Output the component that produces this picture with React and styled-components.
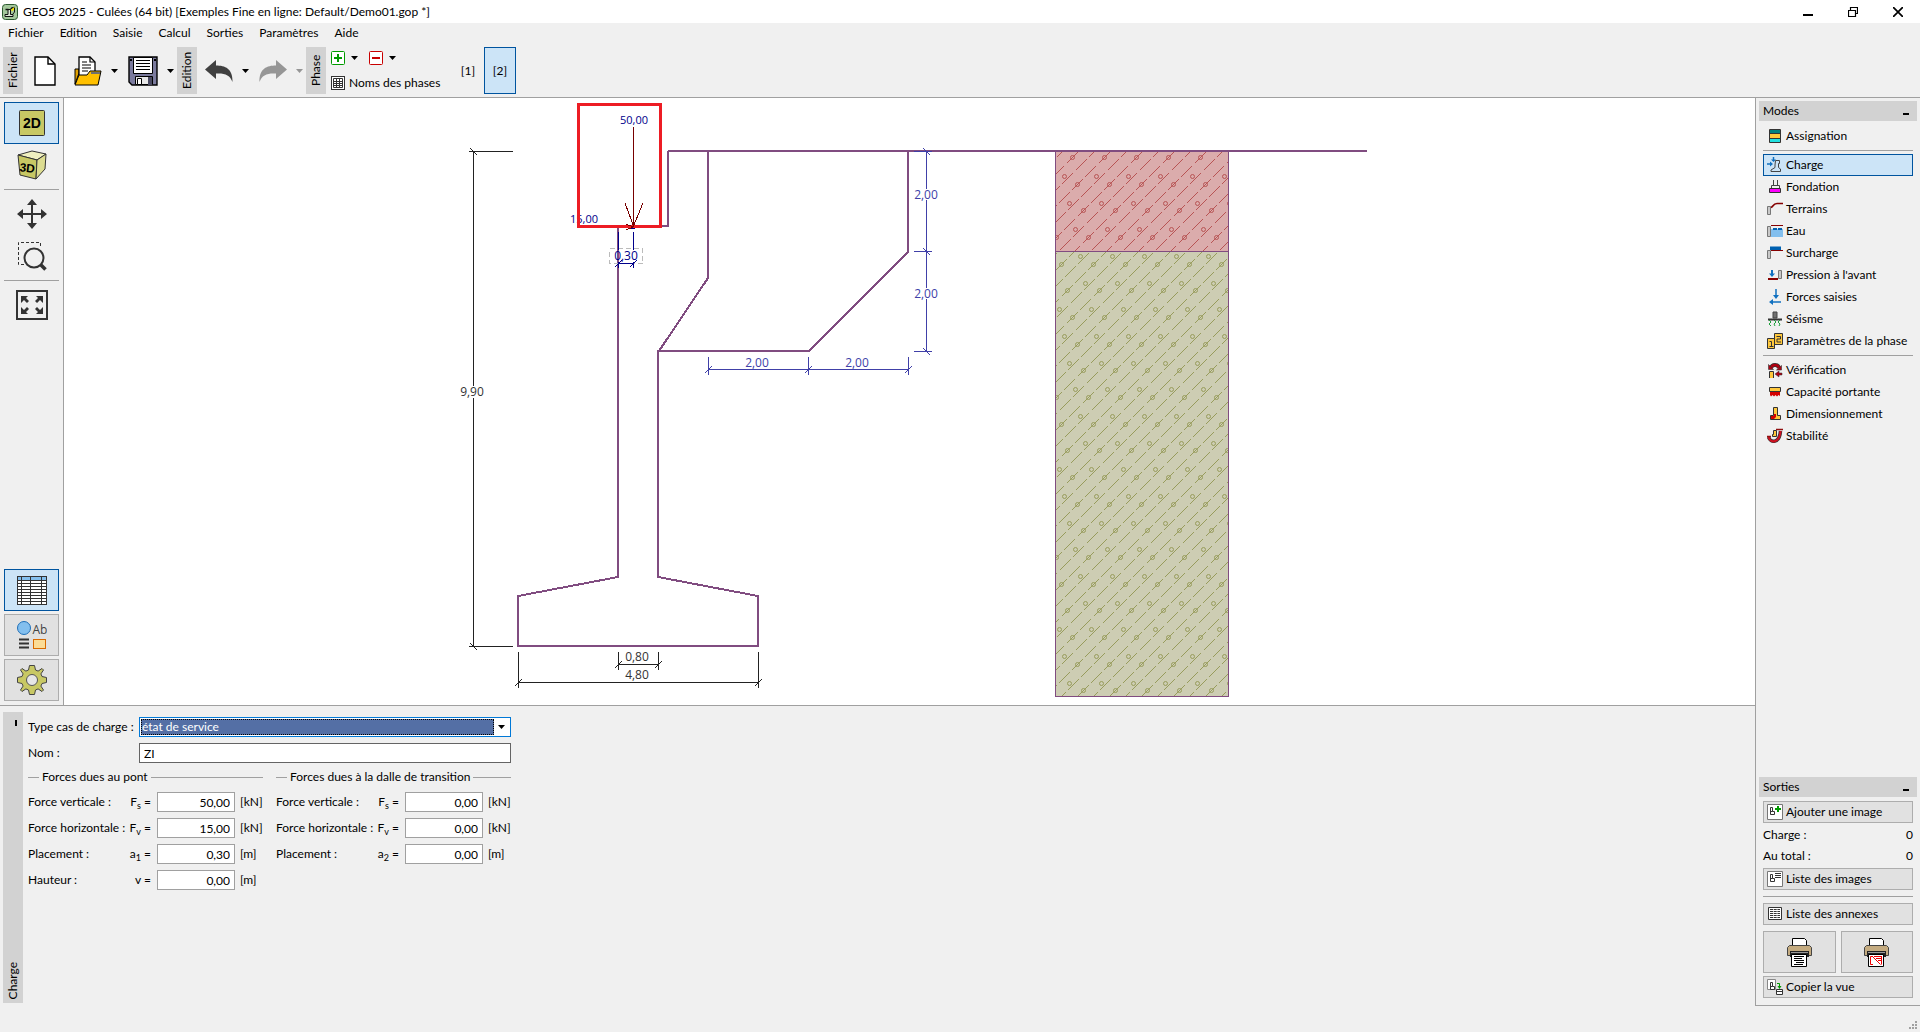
import styled, { createGlobalStyle, css } from 'styled-components';

const GlobalStyle = createGlobalStyle`
  * { box-sizing: border-box; }
  body {
    margin: 0;
    background: #f0f0f0;
    color: #000;
    font: 12px/16px Lato, "Open Sans", sans-serif;
  }
  button, input, select { font: inherit; color: inherit; }
  svg { display: block; flex: none; }
`;

// === LAYOUT ===
const Page = styled.div`
  display: flex;
  flex-direction: column;
  min-height: 100vh;
`;

const TitleBar = styled.header`
  display: flex;
  align-items: center;
  height: 23px;
  padding-left: 2px;
  background: #fff;
`;

const Title = styled.h1`
  flex: 1;
  margin: 0 0 0 5px;
  font-size: 12px;
  font-weight: 400;
`;

const WindowButton = styled.button`
  display: grid;
  place-items: center;
  width: 45px;
  height: 23px;
  padding: 0;
  border: 0;
  background: none;
`;

const MenuBar = styled.nav`
  display: flex;
  gap: 16px;
  height: 20px;
  padding: 0 8px;
`;

const MenuLink = styled.a`
  line-height: 20px;
  color: #000;
  text-decoration: none;
`;

const Toolbar = styled.div`
  display: flex;
  align-items: center;
  height: 55px;
  padding: 4px 3px 3px;
  border-bottom: 1px solid #a0a0a0;
`;

const Grip = styled.span`
  flex: none;
  width: 20px;
  height: 47px;
  background: #d2d2d2;
  line-height: 20px;
  text-align: center;
  writing-mode: vertical-rl;
  transform: rotate(180deg);
`;

const ToolGroup = styled.div`
  display: flex;
  flex: none;
  align-items: center;
  gap: 10px;
  padding: 0 3px 0 8px;
`;

const ToolButton = styled.button`
  display: flex;
  align-items: center;
  gap: ${({ $gap }) => $gap || 9}px;
  padding: 0;
  border: 0;
  background: none;
  white-space: nowrap;
`;

const NewButton = styled(ToolButton)`
  margin: 0 8px 0 3px;
`;

const PhaseTools = styled.div`
  display: flex;
  flex-direction: column;
  gap: 10px;
  width: 126px;
  padding-left: 5px;
`;

const PhaseRow = styled.div`
  display: flex;
  gap: 11px;
`;

const activeBox = css`
  border: 1px solid #00549f;
  background: #cce4f7;
`;

const PhaseTab = styled.button`
  width: 32px;
  height: 47px;
  padding: 0;
  border: 1px solid transparent;
  background: none;
  ${({ $active }) => $active && activeBox}
`;

const Body = styled.div`
  display: flex;
  flex: 1;
`;

const Main = styled.main`
  display: flex;
  flex: 1;
  flex-direction: column;
  min-width: 0;
`;

const Workspace = styled.section`
  display: flex;
  flex: 1;
  border-bottom: 1px solid #a0a0a0;
`;

const SideTools = styled.div`
  display: flex;
  flex-direction: column;
  width: 64px;
  padding: 4px;
  border-right: 1px solid #a0a0a0;
`;

const SideButton = styled.button`
  display: grid;
  place-items: center;
  height: 42px;
  padding: 0;
  border: 1px solid transparent;
  background: none;
  ${({ $raised }) => $raised && css`
    border-color: #adadad;
    background: #e1e1e1;
  `}
  ${({ $active }) => $active && activeBox}
`;

const SideBottom = styled.div`
  display: grid;
  gap: 3px;
  margin-top: auto;
`;

const Rule = styled.hr`
  width: auto;
  height: 1px;
  margin: ${({ $space }) => $space || 3}px 0;
  border: 0;
  background: #a0a0a0;
`;

const Canvas = styled.div`
  flex: 1;
  min-width: 0;
  background: #fff;
`;

const Drawing = styled.svg`
  width: 100%;
  height: auto;
  text {
    font-family: "Open Sans", "Noto Sans", sans-serif;
    font-size: 12px;
    text-anchor: middle;
  }
`;

const LoadText = styled.text`
  && { font-size: 11px; }
`;

const StatusBar = styled.footer`
  display: flex;
  justify-content: flex-end;
  align-items: flex-end;
  height: 26px;
  padding: 2px;
`;

// === FORM ===
const FormPanel = styled.section`
  display: flex;
  gap: 5px;
  min-height: 300px;
  padding: 6px 3px 3px;
`;

const FormGrip = styled.div`
  display: flex;
  flex: none;
  flex-direction: column;
  align-items: center;
  justify-content: space-between;
  width: 20px;
  padding: 8px 0 4px;
  background: #d2d2d2;
`;

const VerticalText = styled.span`
  line-height: 20px;
  writing-mode: vertical-rl;
  transform: rotate(180deg);
`;

const GripMark = styled.span`
  width: 2px;
  height: 6px;
  margin-left: 6px;
  background: #000;
`;

const Form = styled.form`
  display: flex;
  flex-direction: column;
  gap: 6px;
  width: 483px;
  padding-top: 5px;
`;

const WideRow = styled.div`
  display: grid;
  grid-template-columns: 111px 1fr;
  align-items: center;
  height: 20px;
  white-space: nowrap;
`;

const SelectBox = styled.div`
  display: flex;
  align-items: center;
  height: 20px;
  padding: 1px 5px 1px 1px;
  border: 1px solid #0078d7;
  background: #fff;
`;

const Select = styled.select`
  flex: 1;
  height: 16px;
  margin-right: 4px;
  padding: 0;
  border: 1px dotted #000;
  border-radius: 0;
  outline: 0;
  background: #546fa5;
  color: #fff;
  line-height: 14px;
  appearance: none;
`;

const Input = styled.input`
  width: 100%;
  height: 20px;
  padding: 0 4px;
  border: 1px solid ${({ $numeric }) => ($numeric ? '#a0a0a0' : '#646464')};
  border-radius: 0;
  outline: 0;
  background: #fff;
  text-align: ${({ $numeric }) => ($numeric ? 'right' : 'left')};
`;

const Groups = styled.div`
  display: grid;
  grid-template-columns: 1fr 1fr;
  gap: 13px;
`;

const Group = styled.fieldset`
  display: flex;
  flex-direction: column;
  gap: 6px;
  min-width: 0;
  margin: 0;
  padding: 0;
  border: 0;
`;

const Legend = styled.legend`
  display: flex;
  align-items: center;
  gap: 3px;
  width: 100%;
  margin-bottom: 7px;
  padding: 0;
  white-space: nowrap;
  &::before, &::after {
    content: "";
    height: 1px;
    background: #a0a0a0;
  }
  &::before { width: 11px; }
  &::after { flex: 1; }
`;

const FieldRow = styled.div`
  display: grid;
  grid-template-columns: 1fr 78px 23px;
  column-gap: 5px;
  align-items: center;
  height: 20px;
`;

const FieldLabel = styled.label`
  display: flex;
  justify-content: space-between;
  min-width: 0;
  padding-right: 1px;
  white-space: nowrap;
  sub { font-size: 9px; line-height: 0; }
`;

// === RIGHT PANEL ===
const RightPanel = styled.aside`
  display: flex;
  flex-direction: column;
  justify-content: space-between;
  width: 165px;
  padding: 3px 3px 7px;
  border-left: 1px solid #a0a0a0;
  border-bottom: 1px solid #a0a0a0;
`;

const PanelHeader = styled.h2`
  display: flex;
  align-items: center;
  justify-content: space-between;
  height: 20px;
  margin: 0 0 4px;
  padding: 0 8px 0 4px;
  background: #d2d2d2;
  font-size: 12px;
  font-weight: 400;
`;

const Minimize = styled.span`
  width: 6px;
  height: 2px;
  margin-top: 6px;
  background: #000;
`;

const PanelBody = styled.div`
  display: flex;
  flex-direction: column;
  padding: 0 4px;
`;

const ModeButton = styled.button`
  display: flex;
  align-items: center;
  gap: 3px;
  height: 22px;
  padding: 0 0 0 3px;
  border: 1px solid transparent;
  background: none;
  text-align: left;
  white-space: nowrap;
  ${({ $raised }) => $raised && css`
    border-color: #adadad;
    background: #e1e1e1;
  `}
  ${({ $active }) => $active && activeBox}
`;

const CountRow = styled.div`
  display: flex;
  justify-content: space-between;
  line-height: 21px;
`;

const Counts = styled.div`
  padding: 1px 0 2px;
`;

const PrintRow = styled.div`
  display: grid;
  grid-template-columns: 1fr 1fr;
  gap: 5px;
  margin: 6px 0 3px;
`;

// === ICONS ===
const icon16 = { width: 16, height: 16, viewBox: '0 0 16 16', fill: 'none', 'aria-hidden': true };

const Caret = ({ color = '#000' }) => (
  <svg width="7" height="4" viewBox="0 0 7 4" aria-hidden="true"><path d="M0 0h7L3.5 4z" fill={color} /></svg>
);

const AppIcon = () => (
  <svg {...icon16}>
    <rect x=".5" y=".5" width="15" height="15" rx="3" fill="#a4c79c" stroke="#2c5a30" />
    <path d="M3 12.5h8v-2H8.500V5.500H6v5H3z" fill="#dce8d6" stroke="#111" />
    <path d="M3.500 5.500h3M8.500 5.500c1-2 2-2 4-2" stroke="#111" strokeWidth="1.5" />
    <path d="M9.500 6.500l3-2.500" stroke="#f5e500" strokeWidth="1.8" />
    <path d="M12.500 4v4l-1.500 2" stroke="#111" />
  </svg>
);

const NewIcon = () => (
  <svg width="22" height="30" viewBox="0 0 22 30" aria-hidden="true">
    <path d="M1 1h13l7 7v21H1z" fill="#fff" stroke="#000" strokeWidth="1.4" />
    <path d="M14 1v7h7" fill="none" stroke="#000" strokeWidth="1.4" />
  </svg>
);

const OpenIcon = () => (
  <svg width="28" height="30" viewBox="0 0 28 30" aria-hidden="true">
    <path d="M1 13h4v4l-4 11z" fill="#e0a000" stroke="#000" />
    <path d="M5 1h11l5 5v14H5z" fill="#fff" stroke="#000" strokeWidth="1.3" />
    <path d="M16 1v5h5M8 6h5M8 9h9M8 12h9M8 15h6" fill="none" stroke="#000" strokeWidth="1.2" />
    <path d="M1 29l4-10h8l3-4h11l-3 14z" fill="#ffc000" stroke="#000" />
    <path d="M17 17h9" stroke="#707070" strokeWidth="2" />
  </svg>
);

const SaveIcon = () => (
  <svg width="30" height="30" viewBox="0 0 30 30" aria-hidden="true">
    <path d="M1 1h28v28H4l-3-3z" fill="#7b7b9e" stroke="#000" strokeWidth="1.4" />
    <path d="M5.5 1.5h19v16h-19z" fill="#fff" stroke="#000" />
    <path d="M8 4.5h14M8 7.5h14M8 10.5h14M8 13.5h14" stroke="#000" />
    <path d="M7.5 20.5h17v8h-17z" fill="#e8e8e8" stroke="#000" />
    <path d="M9.5 22.5h4v6h-4z" fill="#fff" stroke="#000" />
    <path d="M20 21h4v8h-4z" fill="#4a4a62" />
    <path d="M2 3h2v2H2zM26 3h2v2h-2z" fill="#000" />
  </svg>
);

const ArrowIcon = ({ color, flip }) => (
  <svg width="28" height="22" viewBox="0 0 28 22" aria-hidden="true">
    <path
      d="M0 9.5L11 0v5.5c9 0 17 3 16.5 16.5C25 15 20 13 11 13.5V19z"
      fill={color}
      transform={flip ? 'translate(28 0) scale(-1 1)' : undefined}
    />
  </svg>
);

const SignIcon = ({ color, plus }) => (
  <svg width="14" height="14" viewBox="0 0 14 14" aria-hidden="true">
    <rect x=".5" y=".5" width="13" height="13" rx="1" fill="#fff" stroke={color} />
    <path d={plus ? 'M3 7h8M7 3v8' : 'M3 7h8'} stroke={color} strokeWidth="2" />
  </svg>
);

const NamesIcon = () => (
  <svg width="14" height="14" viewBox="0 0 14 14" fill="none" stroke="#333" aria-hidden="true">
    <rect x=".5" y=".5" width="13" height="13" fill="#fff" />
    <path d="M2.5 2.5h9v9h-9zM2.5 5.5h9M2.5 7.5h9M2.5 9.5h9M5.5 2.5v9M8.5 2.5v9" />
  </svg>
);

const View2DIcon = () => (
  <svg width="26" height="26" viewBox="0 0 26 26" aria-hidden="true">
    <rect x=".5" y=".5" width="25" height="25" rx="1" fill="#c8c864" stroke="#333" />
    <text x="13" y="18" textAnchor="middle" fontFamily="Liberation Sans, sans-serif" fontWeight="700" fontSize="14">2D</text>
  </svg>
);

const View3DIcon = () => (
  <svg width="30" height="30" viewBox="0 0 30 30" stroke="#333" strokeLinejoin="round" aria-hidden="true">
    <path d="M1 5L15 1l14 3-9 6z" fill="#f0f0c0" />
    <path d="M1 5l19 5-1 19L3 25z" fill="#c8c864" />
    <path d="M20 10l9-6-1 15-9 10z" fill="#dcdc90" />
    <text x="10" y="22" transform="rotate(6 10 20)" stroke="none" textAnchor="middle" fontFamily="Liberation Sans, sans-serif" fontWeight="700" fontSize="12">3D</text>
  </svg>
);

const MoveIcon = () => (
  <svg width="30" height="30" viewBox="0 0 30 30" aria-hidden="true">
    <path d="M15 4v22M4 15h22" stroke="#333" strokeWidth="2" />
    <path d="M15 0l5 6H10zM15 30l5-6H10zM0 15l6-5v10zM30 15l-6-5v10z" fill="#333" />
  </svg>
);

const ZoomIcon = () => (
  <svg width="30" height="30" viewBox="0 0 30 30" fill="none" stroke="#333" aria-hidden="true">
    <path d="M7 23.5H1.5v-22h22V7" strokeDasharray="3 2" />
    <circle cx="17" cy="17" r="9.5" strokeWidth="2" />
    <path d="M23.5 23.5l5 5" strokeWidth="3.5" />
  </svg>
);

const FitIcon = () => (
  <svg width="24" height="30" viewBox="0 0 24 30" overflow="visible" aria-hidden="true">
    <rect x="-3" y="1" width="30" height="28" fill="none" stroke="#333" strokeWidth="2" />
    <path d="M1 6h7L6 8l3 3-2 2-3-3-3 3zM23 6h-7l2 2-3 3 2 2 3-3 3 3zM1 24h7l-2-2 3-3-2-2-3 3-3-3zM23 24h-7l2-2-3-3 2-2 3 3 3-3z" fill="#333" />
  </svg>
);

const TableIcon = () => (
  <svg width="30" height="29" viewBox="0 0 30 29" shapeRendering="crispEdges" aria-hidden="true">
    <rect x=".5" y=".5" width="29" height="28" fill="#fff" stroke="#333" />
    <path d="M1 1h28v3H1z" fill="#83bfee" />
    <path d="M4.5 1v27M13.5 1v27M24.5 1v27M1 4.5h28M1 7.5h28M1 10.5h28M1 13.5h28M1 16.5h28M1 19.5h28M1 22.5h28M1 25.5h28" stroke="#333" />
  </svg>
);

const StyleIcon = () => (
  <svg width="30" height="28" viewBox="0 0 30 28" aria-hidden="true">
    <circle cx="7" cy="7" r="6.5" fill="#83bfee" stroke="#2070b8" />
    <text x="23" y="13" textAnchor="middle" fontFamily="Open Sans, sans-serif" fontSize="12" fill="#444">Ab</text>
    <path d="M2 18.5h10M2 22.5h10M2 26.5h10" stroke="#333" strokeWidth="2" />
    <rect x="16.5" y="18.5" width="12" height="9" fill="#fbdc96" stroke="#d86a00" />
  </svg>
);

const GearIcon = () => (
  <svg width="30" height="30" viewBox="-15 -15 30 30" aria-hidden="true">
    <path
      d="M-2.5-14.5h5l1 4.5 2.6 1.1L10-11.5 11.5-10 8.9-6.1 10-3.5l4.5 1v5l-4.5 1-1.1 2.6L11.5 10 10 11.5 6.1 8.9 3.5 10l-1 4.5h-5l-1-4.5-2.6-1.1L-10 11.5-11.5 10-8.9 6.1-10 3.5l-4.5-1v-5l4.5-1 1.1-2.6L-11.5-10-10-11.5-6.1-8.9-3.5-10z"
      fill="#c8c864"
      stroke="#444"
      strokeLinejoin="round"
    />
    <circle r="5.5" fill="#e6e6e6" stroke="#555" />
  </svg>
);

const AssignIcon = () => (
  <svg {...icon16}>
    <path d="M2.5 1.5h11v13h-11z" fill="#ffc83c" stroke="#333" />
    <path d="M3 2h10v3H3z" fill="#008080" />
    <path d="M3 11h10v3H3z" fill="#20e0e0" />
    <path d="M3 5.5h10M3 10.5h10" stroke="#333" />
  </svg>
);

const ChargeIcon = () => (
  <svg {...icon16}>
    <path d="M0 7h4M6.5 0v4" stroke="#1070c0" strokeWidth="1.5" />
    <path d="M3 4.500l3 2.500-3 2.500zM4 2.500h5L6.500 5z" fill="#1070c0" />
    <path d="M8.500 3.500h4v3h-1v4l2 1.500v2.500h-9.500v-1.500l4-2.500V8z" stroke="#444" />
  </svg>
);

const FoundationIcon = () => (
  <svg {...icon16}>
    <path d="M6.5 1v5M10.5 1v5M4.5 9.5v-3h8v3" stroke="#444" />
    <path d="M2.5 9.5h11v4h-11z" fill="#ff00ff" stroke="#333" />
  </svg>
);

const TerrainIcon = () => (
  <svg {...icon16}>
    <path d="M.5 5.5h3v8h-3z" fill="#c8c8c8" stroke="#777" />
    <path d="M4 6.5C6 6 6 2.5 10 2.5h6" stroke="#850000" strokeWidth="1.7" />
  </svg>
);

const WaterIcon = () => (
  <svg {...icon16}>
    <path d="M4 6h12v8H4z" fill="#83bfee" />
    <path d="M.5 3.5h3v10h-3z" fill="#c8c8c8" stroke="#777" />
    <path d="M4 2.5h12" stroke="#850000" />
    <path d="M6 6h4m1 0h4" stroke="#0060b0" strokeWidth="2" />
  </svg>
);

const SurchargeIcon = () => (
  <svg {...icon16}>
    <path d="M.5 5.5h3v8h-3z" fill="#c8c8c8" stroke="#777" />
    <path d="M4 5.5h12" stroke="#850000" />
    <path d="M3 1l1 1 1-1 1 1 1-1 1 1 1-1 1 1 1-1 1 1 1-1 1 1v3H3z" fill="#0060b0" />
  </svg>
);

const PressureIcon = () => (
  <svg {...icon16}>
    <path d="M1 12h10" stroke="#850000" strokeWidth="2" />
    <path d="M5 3v5" stroke="#1070c0" strokeWidth="2" />
    <path d="M2 6.5h6L5 10z" fill="#1070c0" />
    <path d="M11.5 3.5h3v8h-3z" fill="#c8c8c8" stroke="#777" />
  </svg>
);

const ForcesIcon = () => (
  <svg {...icon16}>
    <path d="M9 0v8M5 13h9" stroke="#1070c0" strokeWidth="1.5" />
    <path d="M6 6h6l-3 4zM2 13l4-3v6z" fill="#1070c0" />
  </svg>
);

const SeismicIcon = () => (
  <svg {...icon16}>
    <path d="M6 1h4v6H6z" fill="#707070" stroke="#444" />
    <path d="M1 8.5h14" stroke="#333" strokeWidth="2" />
    <path d="M2 9l2 2-2 2 2 2M7 9l2 2-2 2 1 2M13 9l-2 2 2 2-1 2" stroke="#1da03c" />
  </svg>
);

const StageIcon = () => (
  <svg {...icon16}>
    <path d="M7.5.5h8v11h-8z" fill="#ffc83c" stroke="#333" />
    <path d="M.5 5.5h7v10h-7z" fill="#ffc83c" stroke="#333" />
    <path d="M9.5 3.5h4V6H10v3h4M2.5 8.5h2v5m-2 0h4" stroke="#333" />
  </svg>
);

const CheckIcon = () => (
  <svg {...icon16}>
    <path d="M4 6c1-4 7-4 8 0" stroke="#333" strokeWidth="4" />
    <path d="M4 6c1-4 7-4 8 0" stroke="#b00010" strokeWidth="2.5" />
    <path d="M1.5 2.5v5h5zM14.5 3.5V8h-5z" fill="#b00010" stroke="#333" strokeWidth=".6" />
    <path d="M3 10h3v6H3z" fill="#ffc83c" />
    <path d="M2.5 16V9.5h4V16" stroke="#333" />
    <path d="M8 12l4-3v2h3v2h-3v2z" fill="#b00010" stroke="#333" strokeWidth=".5" />
  </svg>
);

const BearingIcon = () => (
  <svg {...icon16}>
    <path d="M3 7h10v5l-1.5-1-1.5 1.5L8.5 11 7 12.5 5.5 11 4 12.5 3 11z" fill="#d40000" />
    <path d="M2.5 3.5h11v4h-11z" fill="#ffc83c" stroke="#333" />
  </svg>
);

const SizingIcon = () => (
  <svg {...icon16}>
    <path d="M6.5 1.5h4v8h3v4h-10v-4h3z" fill="#ffc83c" stroke="#333" />
    <path d="M4 10h3V8h2v3l-2 2H4z" fill="#d40000" />
  </svg>
);

const StabilityIcon = () => (
  <svg {...icon16}>
    <path d="M1.5 9c2 6.500 11 6.500 12-6" stroke="#333" strokeWidth="3.5" />
    <path d="M1.5 9c2 6.500 11 6.500 12-6" stroke="#d01020" strokeWidth="2.2" />
    <path d="M9 1.5h7M0 8.5h4" stroke="#901010" strokeWidth="1.5" />
    <path d="M6.5 2.5h3v6h-4v-2h1z" fill="#ffc83c" stroke="#333" />
  </svg>
);

const PictureIcon = ({ variant }) => (
  <svg {...icon16}>
    {variant === 'copy'
      ? <path d="M.5.5h8v10h-8z" fill="#fff" stroke="#888" />
      : <path d="M.5.5h15v15h-15z" fill="#fff" stroke="#777" />}
    <path d="M3.5 3.5h2v4h2v3h-4zM3.5 7.5h2" stroke="#333" />
    {variant === 'add' && <path d="M11 2v6M8 5h6" stroke="#009a00" strokeWidth="2" />}
    {variant === 'list' && <path d="M8 2.5h6M8 4.5h6M8 6.5h6" stroke="#333" />}
    {variant === 'copy' && (
      <>
        <path d="M10 4.5h2.5V8" stroke="#009a00" />
        <path d="M10.5 7h4l-2 3z" fill="#009a00" />
        <path d="M9.5 10.5h6v5h-6zM9.5 12.5h6" fill="#fff" stroke="#333" />
      </>
    )}
  </svg>
);

const AnnexIcon = () => (
  <svg {...icon16}>
    <path d="M1.5 1.5h13v12h-13z" fill="#fff" stroke="#333" />
    <path d="M3 3.5h10M3 5.5h10M3 7.5h10M3 9.5h10M3 11.5h10" stroke="#333" strokeDasharray="3 .7" />
  </svg>
);

const PrinterIcon = ({ picture }) => (
  <svg width="25" height="29" viewBox="0 0 25 29" aria-hidden="true">
    <path d="M5.5 7.5v-7h12l2 2v5" fill="#fff" stroke="#000" />
    <path d="M.5 9.5l2-2h20l2 2v8H.5z" fill="#c4ab80" stroke="#444" />
    <path d="M3 13h19v6H3z" fill="#222" />
    <path d="M4 14h17v1H4z" fill="#999" />
    <path d="M4.5 16.5h15v12h-15z" fill="#fff" stroke="#000" />
    {picture
      ? <path d="M9 18.5H6.5v8H9M8.5 18.5l8 8M10 18.500h7.500M12 20.500h5.500M14 22.500h3.500M17.500 18v8.500" fill="none" stroke="#e00" />
      : <path d="M7 18.5h10M7 20.5h8M7 22.5h10M9 24.5h8M7 26.5h9" stroke="#000" />}
  </svg>
);

// === DRAWING ===
const range = (from, to) => Array.from({ length: to - from + 1 }, (_, i) => from + i);

// Hatch: dashed 45° lines plus two interleaved sets of pebbles on the same lattice
const cells = range(-1, 21).flatMap((row) =>
  range(-5, 6).map((col) => ({
    x: 1072 + 32 * col + Math.round((16 * row) / 3),
    y: 157 + Math.round((80 * row) / 3),
  })));
const dash = (x, y) => `M${x - 5} ${y + 6}l11 -11`;
const hatchLines = cells
  .map(({ x, y }) => dash(x, y) + dash(x + 13, y - 13) + dash(x + 9, y + 7) + dash(x + 22, y - 6))
  .join('');
const pebbles = cells.flatMap(({ x, y }) => [{ x, y }, { x: x - 8, y: y + 19 }]);

function Soil({ id, top, bottom, fill, line }) {
  return (
    <g>
      <clipPath id={id}><rect x="1055" y={top} width="174" height={bottom - top} /></clipPath>
      <rect x="1055" y={top} width="174" height={bottom - top} fill={fill} />
      <g clipPath={`url(#${id})`} fill="none" stroke={line}>
        <path d={hatchLines} shapeRendering="crispEdges" />
        {pebbles.map(({ x, y }) => <circle key={`${x}-${y}`} cx={x + 0.5} cy={y + 0.5} r="2" />)}
      </g>
      <rect x="1055.5" y={top - 0.5} width="173" height={bottom - top} fill="none" stroke="#804c80" />
    </g>
  );
}

// Horizontal dimension: points along x, extension lines from y1 to y2
function DimX({ points, y, y1, y2, color }) {
  return (
    <g stroke={color} shapeRendering="crispEdges">
      <path d={`M${points[0]} ${y + 0.5}H${points[points.length - 1]}`} />
      {points.map((x) => <path key={x} d={`M${x + 0.5} ${y1}V${y2}M${x - 3} ${y + 4}l7 -7`} />)}
    </g>
  );
}

function DimY({ points, x, x1, x2, color }) {
  return (
    <g stroke={color} shapeRendering="crispEdges">
      <path d={`M${x + 0.5} ${points[0]}V${points[points.length - 1]}`} />
      {points.map((y) => <path key={y} d={`M${x1} ${y + 0.5}H${x2}M${x - 3} ${y - 3}l7 7`} />)}
    </g>
  );
}

function AbutmentDrawing() {
  return (
    <Drawing viewBox="64 98 1691 607" role="img" aria-label="Culée">
      <Soil id="soil-top" top={152} bottom={252} fill="#dbacac" line="#b85454" />
      <Soil id="soil-base" top={252} bottom={697} fill="#cdcdb3" line="#989c5c" />

      <g fill="none" stroke="#804c80" strokeWidth="2" shapeRendering="crispEdges">
        <path d="M668 151H1367" />
        <path d="M668 151V226H618V577L518 596V646H758V596L658 577V351H809L908 252V151" />
        <path d="M708 151V278L659 351" />
      </g>

      <DimY points={[151, 646]} x={473} x1={469} x2={513} color="#222" />
      <rect x="466" y="386" width="14" height="12" fill="#fff" />
      <text x="472" y="396" fill="#333">9,90</text>
      <DimX points={[618, 658]} y={664} y1={652} y2={670} color="#222" />
      <text x="637" y="661" fill="#333">0,80</text>
      <DimX points={[518, 758]} y={682} y1={652} y2={688} color="#222" />
      <text x="637" y="679" fill="#333">4,80</text>

      <DimX points={[708, 808, 908]} y={369} y1={357} y2={375} color="#4040a8" />
      <text x="757" y="367" fill="#4040a8">2,00</text>
      <text x="857" y="367" fill="#4040a8">2,00</text>
      <DimY points={[151, 251, 351]} x={926} x1={914} x2={932} color="#4040a8" />
      <rect x="920" y="189" width="12" height="11" fill="#fff" />
      <rect x="920" y="288" width="12" height="11" fill="#fff" />
      <text x="926" y="199" fill="#4040a8">2,00</text>
      <text x="926" y="298" fill="#4040a8">2,00</text>

      <g fill="none" stroke="#00008b" shapeRendering="crispEdges">
        <rect x="609.5" y="248.5" width="33" height="15" stroke="#bbb" strokeDasharray="5 3" />
        <path d="M618.5 232V250M633.5 232V250M618 263.5H633M618.5 262V268M633.5 262V268M615 267l7 -7M630 267l7 -7" />
        <path d="M631 227.5h4" strokeWidth="3" />
      </g>
      <LoadText x="634" y="124" fill="#00008b">50,00</LoadText>
      <LoadText x="584" y="223" fill="#00008b">15,00</LoadText>
      <text x="626" y="260" fill="#00008b">0,30</text>
      <rect x="578.5" y="104.5" width="82" height="122" fill="none" stroke="#ed1c24" strokeWidth="3" />
      <g fill="none" stroke="#780000" shapeRendering="crispEdges">
        <path d="M633.5 127V226M625 203L633.5 226L643 203M626 224l7 3l-7 3" />
      </g>
    </Drawing>
  );
}

// === DATA ===
const menus = ['Fichier', 'Edition', 'Saisie', 'Calcul', 'Sorties', 'Paramètres', 'Aide'];

const inputModes = [
  { label: 'Charge', Icon: ChargeIcon, active: true },
  { label: 'Fondation', Icon: FoundationIcon },
  { label: 'Terrains', Icon: TerrainIcon },
  { label: 'Eau', Icon: WaterIcon },
  { label: 'Surcharge', Icon: SurchargeIcon },
  { label: "Pression à l'avant", Icon: PressureIcon },
  { label: 'Forces saisies', Icon: ForcesIcon },
  { label: 'Séisme', Icon: SeismicIcon },
  { label: 'Paramètres de la phase', Icon: StageIcon },
];

const analysisModes = [
  { label: 'Vérification', Icon: CheckIcon },
  { label: 'Capacité portante', Icon: BearingIcon },
  { label: 'Dimensionnement', Icon: SizingIcon },
  { label: 'Stabilité', Icon: StabilityIcon },
];

const groups = [
  {
    title: 'Forces dues au pont',
    fields: [
      { id: 'pont-fs', label: 'Force verticale :', symbol: 'F', sub: 's', value: '50,00', unit: '[kN]' },
      { id: 'pont-fv', label: 'Force horizontale :', symbol: 'F', sub: 'v', value: '15,00', unit: '[kN]' },
      { id: 'pont-a1', label: 'Placement :', symbol: 'a', sub: '1', value: '0,30', unit: '[m]' },
      { id: 'pont-v', label: 'Hauteur :', symbol: 'v', value: '0,00', unit: '[m]' },
    ],
  },
  {
    title: 'Forces dues à la dalle de transition',
    fields: [
      { id: 'dalle-fs', label: 'Force verticale :', symbol: 'F', sub: 's', value: '0,00', unit: '[kN]' },
      { id: 'dalle-fv', label: 'Force horizontale :', symbol: 'F', sub: 'v', value: '0,00', unit: '[kN]' },
      { id: 'dalle-a2', label: 'Placement :', symbol: 'a', sub: '2', value: '0,00', unit: '[m]' },
    ],
  },
];

function ModeList({ modes }) {
  return modes.map(({ label, Icon, active }) => (
    <ModeButton key={label} $active={active}><Icon />{label}</ModeButton>
  ));
}

export default function App() {
  return (
    <Page>
      <GlobalStyle />
      <TitleBar>
        <AppIcon />
        <Title>GEO5 2025 - Culées (64 bit) [Exemples Fine en ligne: Default/Demo01.gop *]</Title>
        <WindowButton aria-label="Réduire">
          <svg width="10" height="10" viewBox="0 0 10 10"><path d="M0 8h10" stroke="#000" strokeWidth="2" /></svg>
        </WindowButton>
        <WindowButton aria-label="Restaurer">
          <svg width="10" height="10" viewBox="0 0 10 10" fill="none" stroke="#000" strokeWidth="1.2"><path d="M.5 3.5h7v6h-7zM2.5 3.5v-3h7v6h-2" /></svg>
        </WindowButton>
        <WindowButton aria-label="Fermer">
          <svg width="10" height="10" viewBox="0 0 10 10"><path d="M0 0l10 10M10 0L0 10" stroke="#000" strokeWidth="1.7" /></svg>
        </WindowButton>
      </TitleBar>
      <MenuBar>
        {menus.map((menu) => <MenuLink key={menu} href="#">{menu}</MenuLink>)}
      </MenuBar>

      <Toolbar>
        <Grip>Fichier</Grip>
        <ToolGroup>
          <NewButton aria-label="Nouveau"><NewIcon /></NewButton>
          <ToolButton aria-label="Ouvrir"><OpenIcon /><Caret /></ToolButton>
          <ToolButton aria-label="Enregistrer"><SaveIcon /><Caret /></ToolButton>
        </ToolGroup>
        <Grip>Edition</Grip>
        <ToolGroup>
          <ToolButton aria-label="Annuler"><ArrowIcon color="#404040" /><Caret /></ToolButton>
          <ToolButton aria-label="Rétablir"><ArrowIcon color="#969696" flip /><Caret color="#969696" /></ToolButton>
        </ToolGroup>
        <Grip>Phase</Grip>
        <PhaseTools>
          <PhaseRow>
            <ToolButton $gap={6} aria-label="Ajouter une phase"><SignIcon color="#009a00" plus /><Caret /></ToolButton>
            <ToolButton $gap={6} aria-label="Supprimer une phase"><SignIcon color="#c80000" /><Caret /></ToolButton>
          </PhaseRow>
          <ToolButton $gap={4}><NamesIcon />Noms des phases</ToolButton>
        </PhaseTools>
        <PhaseTab>[1]</PhaseTab>
        <PhaseTab $active>[2]</PhaseTab>
      </Toolbar>

      <Body>
        <Main>
          <Workspace>
            <SideTools>
              <SideButton $active aria-label="Vue 2D"><View2DIcon /></SideButton>
              <SideButton aria-label="Vue 3D"><View3DIcon /></SideButton>
              <Rule />
              <SideButton aria-label="Déplacer"><MoveIcon /></SideButton>
              <SideButton aria-label="Zoom"><ZoomIcon /></SideButton>
              <Rule />
              <SideButton aria-label="Ajuster"><FitIcon /></SideButton>
              <SideBottom>
                <SideButton $active aria-label="Tableau"><TableIcon /></SideButton>
                <SideButton $raised aria-label="Style du dessin"><StyleIcon /></SideButton>
                <SideButton $raised aria-label="Réglages"><GearIcon /></SideButton>
              </SideBottom>
            </SideTools>
            <Canvas><AbutmentDrawing /></Canvas>
          </Workspace>

          <FormPanel>
            <FormGrip>
              <GripMark />
              <VerticalText>Charge</VerticalText>
            </FormGrip>
            <Form>
              <WideRow>
                <label htmlFor="type">Type cas de charge :</label>
                <SelectBox>
                  <Select id="type"><option>état de service</option></Select>
                  <Caret />
                </SelectBox>
              </WideRow>
              <WideRow>
                <label htmlFor="nom">Nom :</label>
                <Input id="nom" defaultValue="ZI" />
              </WideRow>
              <Groups>
                {groups.map(({ title, fields }) => (
                  <Group key={title}>
                    <Legend>{title}</Legend>
                    {fields.map(({ id, label, symbol, sub, value, unit }) => (
                      <FieldRow key={id}>
                        <FieldLabel htmlFor={id}>
                          {label}
                          <span>{symbol}{sub && <sub>{sub}</sub>} =</span>
                        </FieldLabel>
                        <Input $numeric id={id} defaultValue={value} />
                        <span>{unit}</span>
                      </FieldRow>
                    ))}
                  </Group>
                ))}
              </Groups>
            </Form>
          </FormPanel>
        </Main>

        <RightPanel>
          <section>
            <PanelHeader>Modes<Minimize /></PanelHeader>
            <PanelBody>
              <ModeButton><AssignIcon />Assignation</ModeButton>
              <Rule />
              <ModeList modes={inputModes} />
              <Rule />
              <ModeList modes={analysisModes} />
            </PanelBody>
          </section>
          <section>
            <PanelHeader>Sorties<Minimize /></PanelHeader>
            <PanelBody>
              <ModeButton $raised><PictureIcon variant="add" />Ajouter une image</ModeButton>
              <Counts>
                <CountRow><span>Charge :</span><span>0</span></CountRow>
                <CountRow><span>Au total :</span><span>0</span></CountRow>
              </Counts>
              <ModeButton $raised><PictureIcon variant="list" />Liste des images</ModeButton>
              <Rule $space={6} />
              <ModeButton $raised><AnnexIcon />Liste des annexes</ModeButton>
              <PrintRow>
                <SideButton $raised aria-label="Imprimer le rapport"><PrinterIcon /></SideButton>
                <SideButton $raised aria-label="Imprimer la vue"><PrinterIcon picture /></SideButton>
              </PrintRow>
              <ModeButton $raised><PictureIcon variant="copy" />Copier la vue</ModeButton>
            </PanelBody>
          </section>
        </RightPanel>
      </Body>
      <StatusBar>
        <svg width="9" height="9" viewBox="0 0 9 9" fill="#a0a0a0" aria-hidden="true">
          <path d="M6 0h2v2H6zM3 3h2v2H3zM6 3h2v2H6zM0 6h2v2H0zM3 6h2v2H3zM6 6h2v2H6z" />
        </svg>
      </StatusBar>
    </Page>
  );
}
